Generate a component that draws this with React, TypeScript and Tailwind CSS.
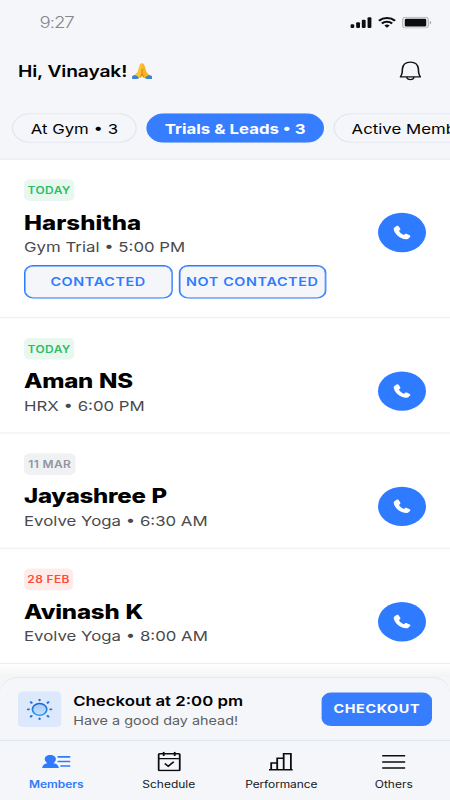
import React from "react";

type Tone = "green" | "gray" | "red";

interface Lead {
  tag: string;
  tone: Tone;
  name: string;
  detail: string;
  tagClass: string;
  nameClass: string;
  actions?: boolean;
}

const toneClass: Record<Tone, string> = {
  green: "bg-[#e9f8ef] text-[#2bbd68]",
  gray: "bg-[#f0f1f2] text-[#9294a0]",
  red: "bg-[#ffecea] text-[#ff4d38]",
};

const leads: Lead[] = [
  { tag: "TODAY", tone: "green", name: "Harshitha", detail: "Gym Trial • 5:00 PM", tagClass: "w-[42px]", nameClass: "tracking-[0.05px]", actions: true },
  { tag: "TODAY", tone: "green", name: "Aman NS", detail: "HRX • 6:00 PM", tagClass: "w-[42px]", nameClass: "tracking-[-0.2px]" },
  { tag: "11 MAR", tone: "gray", name: "Jayashree P", detail: "Evolve Yoga • 6:30 AM", tagClass: "w-[43px]", nameClass: "tracking-[-0.2px]" },
  { tag: "28 FEB", tone: "red", name: "Avinash K", detail: "Evolve Yoga • 8:00 AM", tagClass: "w-[41px]", nameClass: "tracking-[-0.15px]" },
];

function StatusBar() {
  return (
    <div className="flex h-11 items-center justify-between pt-[2px] pl-[33px] pr-[15px]">
      <span className="text-[15.5px] leading-5 font-light tracking-[-0.9px] text-[#85878a]">9:27</span>
      <div className="flex items-center gap-[5px]">
        <svg width="18" height="12" viewBox="0 0 18 12" fill="#0c0d0e">
          <rect x="0" y="7.5" width="3.2" height="4" rx="1" />
          <rect x="4.8" y="5.5" width="3.2" height="6" rx="1" />
          <rect x="9.5" y="3" width="3.2" height="8.5" rx="1" />
          <rect x="14.3" y="0.5" width="3.2" height="11" rx="1" />
        </svg>
        <svg width="15" height="12" viewBox="0 0 15 12" fill="none" stroke="#0c0d0e" strokeWidth="2">
          <path d="M.8 4.1a9.6 9.6 0 0 1 13.4 0" />
          <path d="M3.2 6.9a6.2 6.2 0 0 1 8.6 0" />
          <path d="M7.5 11.2 5.3 9a3.2 3.2 0 0 1 4.4 0z" fill="#0c0d0e" stroke="none" />
        </svg>
        <svg width="25" height="12" viewBox="0 0 25 12">
          <rect x=".6" y=".5" width="21.3" height="11" rx="2.8" fill="none" stroke="#b4b6b9" />
          <rect x="2.3" y="2.1" width="17.9" height="7.8" rx="1.2" fill="#0c0d0e" />
          <path d="M23.2 4.1v3.8c1.6-.7 1.6-3.1 0-3.8z" fill="#a8aaad" />
        </svg>
      </div>
    </div>
  );
}

function FoldedHands() {
  return (
    <svg width="17" height="17" viewBox="0 0 17 17">
      <path d="M8.3.2C7.200.1 6.700 1 6.300 2.300L4.900 8c-.4 1.300-1.400 2.600-2.500 3.900l2.500 3.600c1.700-.2 3.100-1 3.500-2.400z" fill="#fdc135" />
      <path d="M8.300.2c1.100-.1 1.700.8 2.100 2.100L11.800 8c.4 1.300 1.400 2.600 2.500 3.900l-2.500 3.600c-1.700-.2-3.100-1-3.500-2.400z" fill="#f9b325" />
      <path d="M8.350 6v4.800M8.350 10.800 7 14M8.350 10.800 9.700 14" stroke="#c07c14" strokeWidth=".8" fill="none" />
      <path d="M2.300 12c1.700.7 3 1.700 3.600 3.400-1.900.9-3.900 1-5.800.7v-2.900z" fill="#3d82cf" />
      <path d="M14.400 12c-1.700.7-3 1.700-3.600 3.400 1.900.9 3.900 1 5.800.7v-2.900z" fill="#3d82cf" />
    </svg>
  );
}

function BellIcon() {
  return (
    <svg width="20" height="20" viewBox="0 0 20 20" fill="none" stroke="#111315" strokeWidth="1.3" strokeLinejoin="round">
      <path d="M1.700 16.100c.9-1.600 1.500-2.900 1.500-4.900l.1-3C3.600 3.700 6.200 1 10 1s6.400 2.700 6.700 7.200l.1 3c0 2 .6 3.300 1.500 4.900z" />
      <path d="M6.900 16.300c.4 1.700 1.400 2.500 3.100 2.500s2.700-.8 3.100-2.500" />
    </svg>
  );
}

function PhoneIcon() {
  return (
    <svg width="16" height="16" viewBox="0 0 16 16" fill="#fff">
      <path d="M2.200 2.300 3.500 1.300c.5-.4 1.400-.3 1.700.3l1.300 2.500c.3.5.2 1.200-.3 1.600l-.7.6c.4 1.700 2.300 3.700 4.200 4.300l.7-.8c.4-.5 1.100-.6 1.600-.3l2.400 1.400c.6.4.7 1.100.3 1.600l-1.200 1.500c-.5.6-1.200.9-2 .8C6.500 14.300 1.700 9.500 1.100 4.600c-.1-.9.4-1.700 1.100-2.300z" />
    </svg>
  );
}

function LeadCard({ lead }: { lead: Lead }) {
  return (
    <article className={`flex items-start justify-between border-b border-[#ececf1] px-5 ${lead.actions ? "h-[161px]" : "h-[117px]"}`}>
      <div className="pt-[20px]">
        <div className={`flex h-[22px] items-center justify-center rounded-[5px] text-[10px] font-semibold tracking-[0.3px] whitespace-nowrap ${toneClass[lead.tone]} ${lead.tagClass}`}>
          {lead.tag}
        </div>
        <h2 className={`mt-[10px] text-[20px] leading-6 font-[850] [word-spacing:0.8px] whitespace-nowrap text-black ${lead.nameClass}`}>{lead.name}</h2>
        <p className="mt-[3px] text-[14px] leading-5 whitespace-nowrap text-[#4a4a4c]">{lead.detail}</p>
        {lead.actions && (
          <div className="mt-2 flex gap-[5px] text-[12px] font-semibold tracking-[0.5px] text-[#2f7bff]">
            <button className="h-[34px] w-[123.5px] rounded-lg border-[1.2px] border-[#2f7bff] bg-[#f4f6f9] shadow-[inset_0_0_0_0.4px_#2f7bff]">CONTACTED</button>
            <button className="h-[34px] w-[123.5px] rounded-lg border-[1.2px] border-[#2f7bff] bg-[#f4f6f9] whitespace-nowrap shadow-[inset_0_0_0_0.4px_#2f7bff]">NOT CONTACTED</button>
          </div>
        )}
      </div>
      <button className="mt-[54px] flex size-10 items-center justify-center rounded-full bg-[#2f7bff]" aria-label={`Call ${lead.name}`}>
        <PhoneIcon />
      </button>
    </article>
  );
}

function SunIcon() {
  return (
    <svg width="22" height="22" viewBox="0 0 22 22" fill="none">
      <defs>
        <linearGradient id="sun" x1="0" y1="0" x2="0" y2="1">
          <stop offset="0" stopColor="#1c62d1" />
          <stop offset="1" stopColor="#2d9bea" />
        </linearGradient>
        <linearGradient id="core" x1="0" y1="0" x2="0" y2="1">
          <stop offset="0" stopColor="#a9c8f5" />
          <stop offset="1" stopColor="#c3e4fc" />
        </linearGradient>
      </defs>
      <circle cx="11" cy="11" r="6" fill="url(#core)" stroke="url(#sun)" strokeWidth="1.4" />
      <g stroke="#1f6fd8" strokeWidth="1.9" strokeLinecap="round">
        <path d="M11 1.200v.6M11 20.200v.6M1.300 11h.7M20 11h.7M3.700 3.700l.6.6M17.700 17.700l.6.6M3.700 18.300l.6-.6M17.700 4.300l.6-.6" />
      </g>
    </svg>
  );
}

function MembersIcon() {
  return (
    <svg width="24" height="20" viewBox="0 0 24 20" fill="#2f7bff">
      <path d="M6.900 3.200c2.900 0 4.700 1.900 4.700 4.300 0 1.700-.8 3.200-2 4.100 2.800.6 4.200 1.900 4.500 5H.1c.3-3.100 1.700-4.400 4.300-5-1.200-.9-2.100-2.400-2.100-4.100 0-2.400 1.700-4.300 4.600-4.300z" />
      <path d="M13 5.300h10.600M13 9.900h10.600M15.300 14.500h8.300" stroke="#2f7bff" strokeWidth="1.7" />
    </svg>
  );
}

function ScheduleIcon() {
  return (
    <svg width="20" height="20" viewBox="0 0 20 20" fill="none" stroke="#0b0c0d" strokeWidth="1.5">
      <rect x="1.200" y="2.100" width="17.600" height="17" rx=".8" />
      <path d="M1.200 7h17.600M5.400 0v4.300M14.600 0v4.300M6.300 12l2.900 2.700 4.600-4.500" />
    </svg>
  );
}

function PerformanceIcon() {
  return (
    <svg width="20" height="20" viewBox="0 0 20 20" fill="none" stroke="#0b0c0d" strokeWidth="1.5">
      <path d="M0 18.400h20M2 18.400v-7h5M7 18.400V6.600h5.400M12.400 18.400V2.100h6v16.300" />
    </svg>
  );
}

function OthersIcon() {
  return (
    <svg width="20" height="20" viewBox="0 0 20 20" fill="none" stroke="#0b0c0d" strokeWidth="1.5">
      <path d="M.5 4.200h19.200M.5 10.400h19.200M.5 16.600h19.200" />
    </svg>
  );
}

const tabs = [
  { label: "Members", icon: <MembersIcon />, className: "font-semibold text-[#2f7bff] tracking-[-0.05px]" },
  { label: "Schedule", icon: <ScheduleIcon />, className: "text-[#151618] tracking-[0px]" },
  { label: "Performance", icon: <PerformanceIcon />, className: "text-[#151618] tracking-[-0.1px]" },
  { label: "Others", icon: <OthersIcon />, className: "text-[#151618] tracking-[0px]" },
];

export default function App() {
  return (
    <div className="h-[800px] w-[450px] overflow-hidden bg-white">
      <div className="flex h-[812px] w-[375px] origin-top-left scale-x-[1.2] scale-y-[0.98522] flex-col overflow-hidden bg-white font-['Inter','Liberation_Sans',sans-serif]">
        <header className="h-[162px] shrink-0 border-b border-[#e6e8eb] bg-[#f4f6f9]">
          <StatusBar />
          <div className="flex h-14 items-center justify-between pl-[15px] pr-[23px]">
            <div className="flex items-center gap-[4px]">
              <h1 className="text-[16px] leading-6 font-semibold tracking-[-0.1px] whitespace-nowrap text-black">Hi, Vinayak!</h1>
              <FoldedHands />
            </div>
            <BellIcon />
          </div>
          <div className="mt-[15px] flex gap-2 overflow-hidden pl-[10px] text-[14px] whitespace-nowrap text-black">
            <button className="h-[30px] w-[104px] shrink-0 rounded-full border border-[#dfe5ed]">At Gym • 3</button>
            <button className="h-[30px] w-[148px] shrink-0 rounded-full bg-[#377dff] font-bold text-white">Trials &amp; Leads • 3</button>
            <button className="h-[30px] w-[160px] shrink-0 rounded-full border border-[#dfe5ed] pl-[14px] text-left">Active Members • 3</button>
          </div>
        </header>

        <main className="min-h-0 flex-1">
          {leads.map((lead) => (
            <LeadCard key={lead.name} lead={lead} />
          ))}
          <div className="h-[14px] bg-linear-to-b from-white to-[#f2f3f4]" />
        </main>

        <div className="shrink-0 bg-[#f5f6f8]">
          <section className="flex h-[64px] items-center rounded-t-2xl border-t border-[#e1e6ec] bg-[#f4f6f9] px-[15px]">
            <div className="flex size-9 items-center justify-center rounded-[4px] bg-[#dce8fc]">
              <SunIcon />
            </div>
            <div className="ml-[10px] pt-[3px] whitespace-nowrap">
              <p className="text-[14px] leading-5 font-semibold text-black">Checkout at 2:00 pm</p>
              <p className="text-[12px] leading-[19px] text-[#5d5e61]">Have a good day ahead!</p>
            </div>
            <button className="ml-auto h-[34px] w-[92px] rounded-lg bg-[#377dff] pt-px text-[12px] font-bold tracking-[0.5px] text-white">CHECKOUT</button>
          </section>
        </div>

        <nav className="flex h-[61px] shrink-0 border-t border-[#dfe7f0] bg-[#f4f6f9] pt-[11px]">
          {tabs.map((tab) => (
            <div key={tab.label} className={`flex flex-1 flex-col items-center ${tab.className}`}>
              {tab.icon}
              <span className="mt-[5px] text-[10px] leading-4">{tab.label}</span>
            </div>
          ))}
        </nav>
      </div>
    </div>
  );
}
